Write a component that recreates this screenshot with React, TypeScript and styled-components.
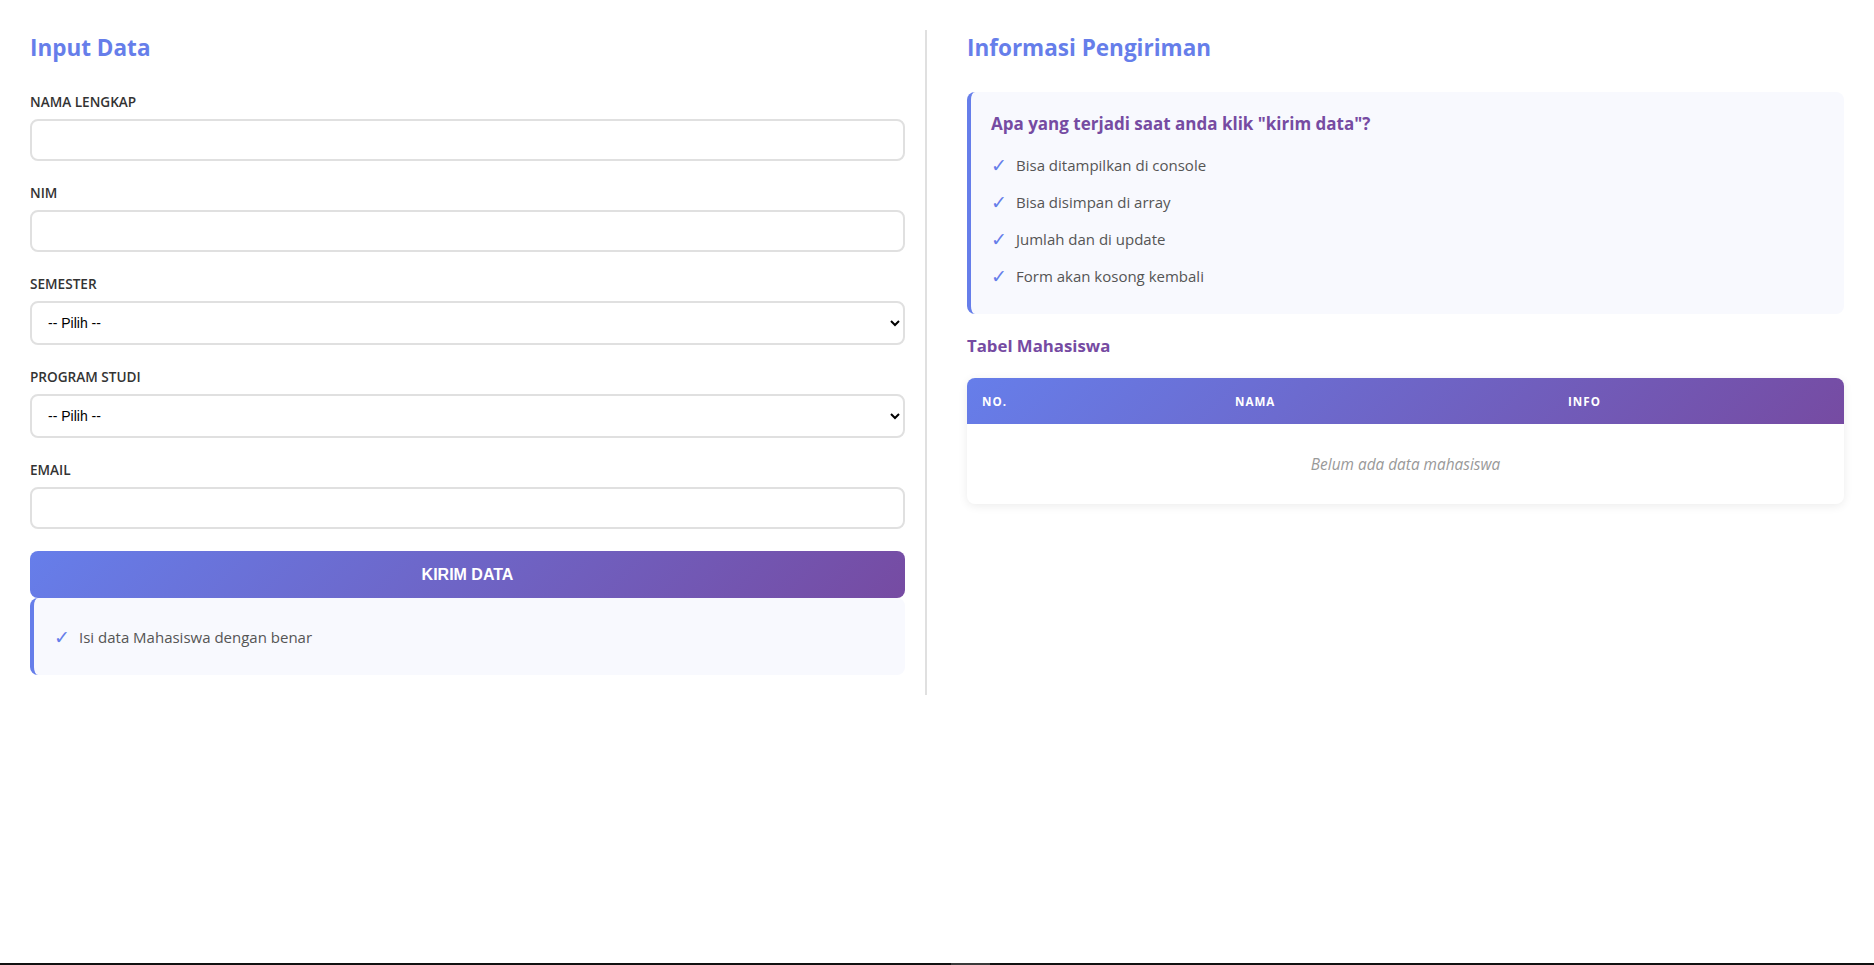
import React from "react";
import styled, { createGlobalStyle } from "styled-components";

const GlobalStyle = createGlobalStyle`
  * { box-sizing: border-box; }
  html, body { margin: 0; padding: 0; background: #ffffff; }
  body { font-family: "Open Sans", "Noto Sans", sans-serif; color: #333; }
`;

const Page = styled.div`
  display: grid;
  grid-template-columns: 897px 1fr;
  column-gap: 40px;
  padding: 30px;
  min-height: 965px;
  align-items: start;
`;

const LeftColumn = styled.section`
  padding: 0 20px 20px 0;
  border-right: 2px solid #e0e0e0;
`;

const RightColumn = styled.section``;

const Heading = styled.h2`
  margin: 0 0 26px;
  font-size: 22.5px;
  line-height: 36px;
  font-weight: 700;
  color: #667eea;
`;

const FormGroup = styled.div`
  margin-bottom: 22px;
`;

const Label = styled.label`
  display: block;
  font-size: 13.6px;
  line-height: 20px;
  font-weight: 600;
  color: #333;
  text-transform: uppercase;
  margin-bottom: 7px;
`;

const TextInput = styled.input`
  display: block;
  width: 100%;
  height: 42px;
  padding: 0 12px;
  border: 2px solid #e0e0e0;
  border-radius: 8px;
  font-size: 14px;
  font-family: "Liberation Sans", Arial, sans-serif;
  background: #fff;
  outline: none;
`;

const Select = styled.select`
  display: block;
  width: 100%;
  height: 44px;
  padding: 0 12px;
  border: 2px solid #e0e0e0;
  border-radius: 8px;
  font-size: 14px;
  font-family: "Liberation Sans", Arial, sans-serif;
  color: #000;
  background: #fff;
  outline: none;
`;

const SubmitButton = styled.button`
  display: block;
  width: 100%;
  height: 47px;
  border: none;
  border-radius: 8px;
  background: linear-gradient(135deg, #667eea 0%, #764ba2 100%);
  color: #fff;
  font-family: "Liberation Sans", Arial, sans-serif;
  font-size: 16px;
  font-weight: 700;
  text-transform: uppercase;
  cursor: pointer;
`;

const InfoBox = styled.div`
  background: #f8f9fe;
  border-left: 4px solid #667eea;
  border-radius: 8px;
  padding: 20px;
`;

const InfoTitle = styled.h3`
  margin: 0 0 10px;
  font-size: 17px;
  line-height: 24px;
  font-weight: 700;
  color: #764ba2;
`;

const CheckList = styled.ul`
  list-style: none;
  margin: 0;
  padding: 0;
`;

const CheckItem = styled.li`
  display: flex;
  align-items: center;
  height: 37px;
  font-size: 15px;
  color: #555;
`;

const CheckMark = styled.span`
  width: 25px;
  flex: none;
  color: #667eea;
  font-size: 19px;
  line-height: 1;
  padding-top: 2px;
  font-family: "DejaVu Sans", sans-serif;
`;

const SubHeading = styled.h3`
  margin: 20px 0 20px;
  font-size: 16.8px;
  line-height: 24px;
  font-weight: 700;
  color: #764ba2;
`;

const TableCard = styled.div`
  border-radius: 8px;
  overflow: hidden;
  background: #fff;
  box-shadow: 0 2px 10px rgba(0, 0, 0, 0.08);
`;

const Table = styled.table`
  width: 100%;
  border-collapse: collapse;
  table-layout: fixed;
`;

const HeadRow = styled.tr`
  background: linear-gradient(135deg, #667eea 0%, #764ba2 100%);
`;

const HeadCell = styled.th<{ $w?: number }>`
  width: ${(p) => (p.$w ? `${p.$w}px` : "auto")};
  height: 46px;
  padding: 0 15px;
  text-align: left;
  color: #fff;
  font-size: 11.6px;
  font-weight: 700;
  letter-spacing: 1px;
  text-transform: uppercase;
`;

const EmptyCell = styled.td`
  height: 80px;
  text-align: center;
  font-style: italic;
  color: #999;
  font-size: 15.4px;
`;

const BottomBar = styled.div`
  position: fixed;
  left: 0;
  right: 0;
  bottom: 0;
  height: 2px;
  background: #111;
  display: flex;
  justify-content: center;
`;

const BarThumb = styled.span`
  width: 39px;
  margin-left: 66px;
  background: #3a3a3a;
`;

const whatHappens = [
  "Bisa ditampilkan di console",
  "Bisa disimpan di array",
  "Jumlah dan di update",
  "Form akan kosong kembali",
];

export default function App() {
  return (
    <>
      <GlobalStyle />
      <Page>
        <LeftColumn>
          <Heading>Input Data</Heading>
          <FormGroup>
            <Label>Nama Lengkap</Label>
            <TextInput type="text" />
          </FormGroup>
          <FormGroup>
            <Label>NIM</Label>
            <TextInput type="text" />
          </FormGroup>
          <FormGroup>
            <Label>Semester</Label>
            <Select defaultValue="">
              <option value="">-- Pilih --</option>
            </Select>
          </FormGroup>
          <FormGroup>
            <Label>Program Studi</Label>
            <Select defaultValue="">
              <option value="">-- Pilih --</option>
            </Select>
          </FormGroup>
          <FormGroup>
            <Label>Email</Label>
            <TextInput type="email" />
          </FormGroup>
          <SubmitButton type="button">Kirim Data</SubmitButton>
          <InfoBox>
            <CheckList>
              <CheckItem>
                <CheckMark>✓</CheckMark>Isi data Mahasiswa dengan benar
              </CheckItem>
            </CheckList>
          </InfoBox>
        </LeftColumn>
        <RightColumn>
          <Heading>Informasi Pengiriman</Heading>
          <InfoBox>
            <InfoTitle>Apa yang terjadi saat anda klik "kirim data"?</InfoTitle>
            <CheckList>
              {whatHappens.map((t) => (
                <CheckItem key={t}>
                  <CheckMark>✓</CheckMark>
                  {t}
                </CheckItem>
              ))}
            </CheckList>
          </InfoBox>
          <SubHeading>Tabel Mahasiswa</SubHeading>
          <TableCard>
            <Table>
              <thead>
                <HeadRow>
                  <HeadCell $w={253}>No.</HeadCell>
                  <HeadCell $w={333}>Nama</HeadCell>
                  <HeadCell>Info</HeadCell>
                </HeadRow>
              </thead>
              <tbody>
                <tr>
                  <EmptyCell colSpan={3}>Belum ada data mahasiswa</EmptyCell>
                </tr>
              </tbody>
            </Table>
          </TableCard>
        </RightColumn>
      </Page>
      <BottomBar>
        <BarThumb />
      </BottomBar>
    </>
  );
}
